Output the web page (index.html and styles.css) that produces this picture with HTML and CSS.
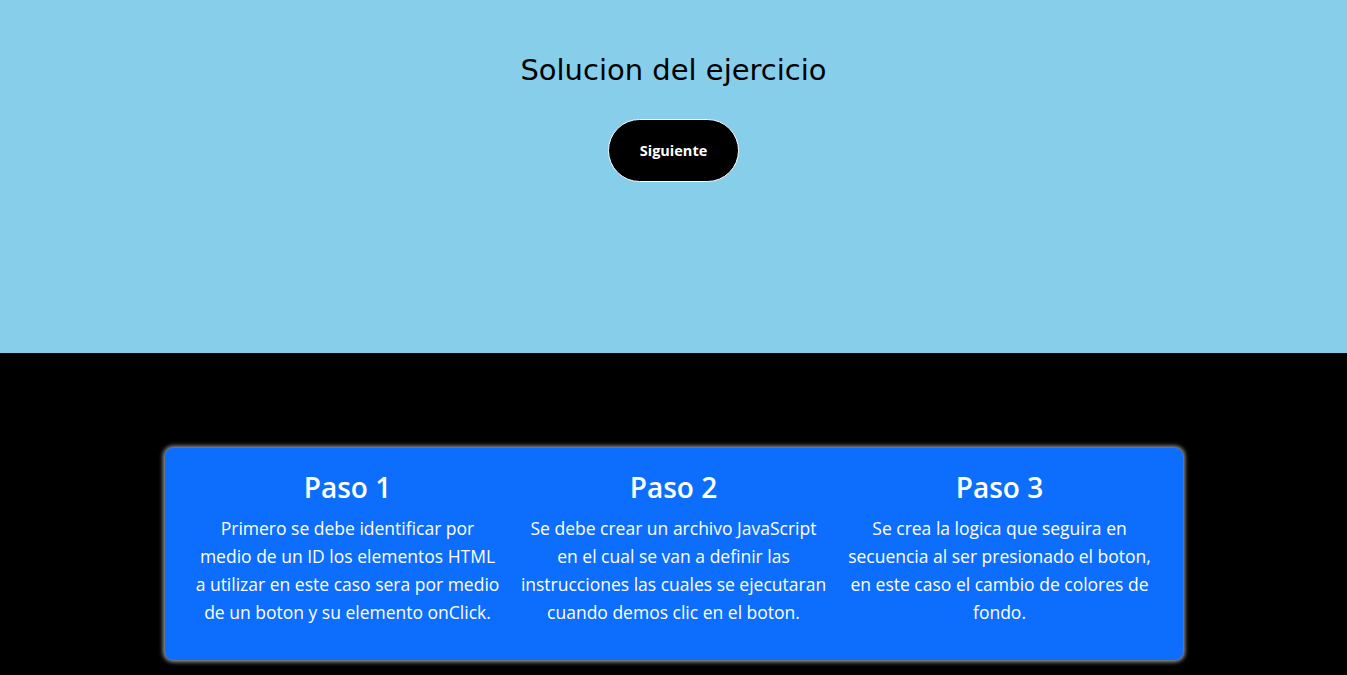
FILE: index.html
```html
<!DOCTYPE html>
<html lang="es">
<head>
<meta charset="utf-8">
<title>Solucion del ejercicio</title>
<link rel="stylesheet" href="styles.css">
</head>
<body>
<header class="hero">
  <h1 class="hero-title">Solucion del ejercicio</h1>
  <button class="next-btn" type="button">Siguiente</button>
</header>
<main class="steps-section">
  <div class="steps-card">
    <div class="step">
      <h2 class="step-title">Paso 1</h2>
      <p class="step-text">Primero se debe identificar por medio de un ID los elementos HTML a utilizar en este caso sera por medio de un boton y su elemento onClick.</p>
    </div>
    <div class="step">
      <h2 class="step-title">Paso 2</h2>
      <p class="step-text">Se debe crear un archivo JavaScript en el cual se van a definir las instrucciones las cuales se ejecutaran cuando demos clic en el boton.</p>
    </div>
    <div class="step">
      <h2 class="step-title">Paso 3</h2>
      <p class="step-text">Se crea la logica que seguira en secuencia al ser presionado el boton, en este caso el cambio de colores de fondo.</p>
    </div>
  </div>
</main>
</body>
</html>
```
FILE: styles.css
```css
* { box-sizing: border-box; }
html, body { margin: 0; padding: 0; }
body {
  font-family: "Open Sans", "Noto Sans", sans-serif;
  color: #fff;
  background: #000;
}
.hero {
  background: #87ceeb;
  height: 353px;
  display: flex;
  flex-direction: column;
  align-items: center;
  padding-top: 48px;
}
.hero-title {
  margin: 0;
  font-family: "DejaVu Sans", sans-serif;
  font-weight: 400;
  font-size: 29px;
  line-height: 44px;
  color: #000;
}
.next-btn {
  margin-top: 27px;
  width: 131px;
  height: 63px;
  border-radius: 32px;
  background: #000;
  color: #fff;
  border: 1px solid #fff;
  font-family: "Open Sans", sans-serif;
  font-weight: 700;
  font-size: 14.5px;
}
.steps-section {
  padding-top: 95px;
  display: flex;
  justify-content: center;
  align-items: flex-start;
  height: 322px;
}
.steps-card {
  width: 1018px;
  background: #0d6efd;
  border-radius: 8px;
  box-shadow: 0 0 4px 2px #9a9a9a;
  padding: 20px 20px 18px;
  display: grid;
  grid-template-columns: repeat(3, 1fr);
  text-align: center;
}
.step { padding: 0 10px; }
.step-title {
  margin: 0 0 8px;
  font-size: 28px;
  font-weight: 600;
  line-height: 38px;
}
.step-text {
  margin: 0 0 16px;
  font-size: 17.5px;
  line-height: 28px;
}
```
